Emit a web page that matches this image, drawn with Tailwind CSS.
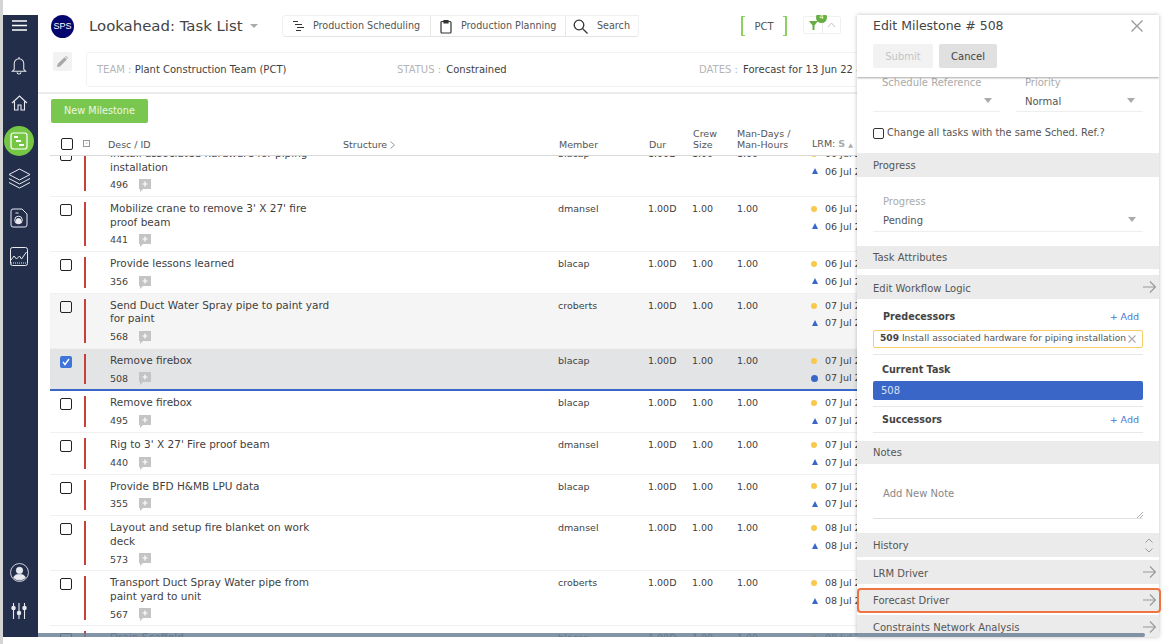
<!DOCTYPE html>
<html lang="en">

<head>
    <meta charset="UTF-8">
    <title>Lookahead: Task List</title>
    <script src="https://cdn.jsdelivr.net/npm/@tailwindcss/browser@4"></script>
</head>

<body class="bg-white overflow-hidden font-['DejaVu_Sans',sans-serif] text-[#3f3f3f]">
    <div class="relative flex w-[1159px] h-[644px] pt-[15px] pb-[7px] border-l-[3px] border-[#d4d4d4]">
        <!-- sidebar -->
        <aside class="w-[35px] shrink-0 bg-[#232e4b] flex flex-col items-center pr-[3px] text-white">
            <svg class="mt-[5px] shrink-0" width="15" height="11" viewBox="0 0 15 11" fill="none" stroke="#fff" stroke-width="1.6"><path d="M0 1h15M0 5.500h15M0 10h15"/></svg>
            <svg class="mt-[25px] shrink-0" width="16" height="19" viewBox="0 0 16 20" fill="none" stroke="#e8eaf0" stroke-width="1.1"><path d="M8 1v2M3 14V8a5 5 0 0 1 10 0v6l2 2H1zM6 17a2 2 0 0 0 4 0"/></svg>
            <svg class="mt-[20px] shrink-0" width="17" height="16" viewBox="0 0 17 16" fill="none" stroke="#e8eaf0" stroke-width="1.1"><path d="M1 8l7.500-7L16 8M3.500 6.500V15h3.500v-5h3v5h3.500V6.500"/></svg>
            <div class="mt-[15px] w-[30px] h-[30px] shrink-0 rounded-full bg-[#76c645] flex items-center justify-center">
                <svg width="18" height="18" viewBox="0 0 18 18" fill="none" stroke="#fff" stroke-width="1.2"><rect x="1" y="1" width="16" height="16" rx="2.500"/><path d="M4 5h4M6 9h5M9 13h5" stroke-width="1.800"/></svg>
            </div>
            <svg class="mt-[12px] shrink-0" width="23" height="22" viewBox="0 0 23 22" fill="none" stroke="#e8eaf0" stroke-width="1"><path d="M11.500 1L22 6.500 11.500 12 1 6.500zM1 10.500L11.500 16 22 10.500M1 14.500L11.500 20 22 14.500"/></svg>
            <svg class="mt-[18px] shrink-0" width="18" height="20" viewBox="0 0 18 20" fill="none" stroke="#e8eaf0" stroke-width="1"><path d="M3 1h9l5 5v11a2 2 0 0 1-2 2H3a2 2 0 0 1-2-2V3a2 2 0 0 1 2-2z"/><circle cx="8.500" cy="12" r="3.800"/><path d="M8.500 12l3 3M5.500 5h3"/><circle cx="8.500" cy="13" r="2.500" fill="#e8eaf0"/></svg>
            <svg class="mt-[19px] shrink-0" width="18" height="19" viewBox="0 0 18 19" fill="none" stroke="#e8eaf0" stroke-width="1"><rect x="0.500" y="0.500" width="17" height="18" rx="2"/><path d="M1 13l3-4 2.500 3 3-3 2 3 5-7"/><path d="M1 16h16" stroke-dasharray="1 1"/></svg>
            <svg class="mt-auto shrink-0" width="19" height="19" viewBox="0 0 18 18" fill="none" stroke="#e8eaf0" stroke-width="0.800"><circle cx="9" cy="9" r="8.500"/><circle cx="9" cy="7" r="3" fill="#e8eaf0"/><path d="M3.500 14c1-3 3-3 5.500-3s4.500 0 5.500 3a8 8 0 0 1-11 0z" fill="#e8eaf0"/></svg>
            <svg class="mt-[21px] mb-[18px] shrink-0" width="16" height="16" viewBox="0 0 16 16" fill="none" stroke="#e8eaf0" stroke-width="1.100"><path d="M2.500 0v16M8 0v16M13.500 0v16"/><circle cx="2.500" cy="5" r="1.700" fill="#e8eaf0"/><circle cx="8" cy="10" r="1.700" fill="#e8eaf0"/><circle cx="13.500" cy="5" r="1.700" fill="#e8eaf0"/></svg>
        </aside>

        <!-- main -->
        <main class="relative flex-1 min-w-0 flex flex-col overflow-hidden">
            <header class="flex h-[37px] shrink-0">
                <div class="ml-[13px] w-[23px] h-[23px] rounded-full bg-[#05056e] text-white text-[9px] flex items-center justify-center font-['Liberation_Sans',sans-serif]">SPS</div>
                <h1 class="ml-[15px] mt-[1px] w-[152px] text-[14.900px] leading-[20px] text-[#444] whitespace-nowrap">Lookahead: Task List</h1>
                <span class="ml-[9px] mt-[9px] w-0 h-0 border-x-[4px] border-x-transparent border-t-[4px] border-t-[#aaa]"></span>
                <div class="ml-[24px] h-[22px] flex rounded-b-[4px] rounded-tl-[4px] border border-[#f0f0f0] border-b-[#e4e4e4] text-[9.600px] text-[#555]">
                    <div class="w-[148px] flex items-center pl-[9px] border-r border-[#e8e8e8]">
                        <svg width="13" height="12" viewBox="0 0 13 12" fill="none" stroke="#333" stroke-width="1.200"><path d="M1 1.500h5M3 4.500h7M5 7.500h7M4 10.500h5"/></svg>
                        <span class="ml-[8px] mt-[1px]">Production Scheduling</span>
                    </div>
                    <div class="w-[135px] flex items-center pl-[9px] border-r border-[#e8e8e8]">
                        <svg width="12" height="15" viewBox="0 0 12 15" fill="none" stroke="#333" stroke-width="1.200"><rect x="1" y="2.500" width="10" height="11.500" rx="1"/><path d="M4 1.500h4v2.500H4z" fill="#333"/></svg>
                        <span class="ml-[9px] mt-[1px]">Production Planning</span>
                    </div>
                    <div class="w-[72px] flex items-center pl-[7px]">
                        <svg width="15" height="15" viewBox="0 0 15 15" fill="none" stroke="#333" stroke-width="1.300"><circle cx="6" cy="6" r="4.800"/><path d="M9.500 9.500L14.500 14.500"/></svg>
                        <span class="ml-[9px] mt-[1px]">Search</span>
                    </div>
                </div>
                <div class="ml-[102px] mt-[1px] w-[46px] h-[20px] flex items-center justify-center border-x-2 border-[#8ed05f] text-[10px] text-[#555] relative">
                    <span class="absolute -left-[2px] top-0 w-[4px] h-[1px] bg-[#8ed05f]"></span>
                    <span class="absolute -left-[2px] bottom-0 w-[4px] h-[1px] bg-[#8ed05f]"></span>
                    <span class="absolute -right-[2px] top-0 w-[4px] h-[1px] bg-[#8ed05f]"></span>
                    <span class="absolute -right-[2px] bottom-0 w-[4px] h-[1px] bg-[#8ed05f]"></span>
                    PCT
                </div>
                <div class="relative ml-[16px] mt-[1px] h-[18px] flex border border-[#f0f0f0] rounded-[2px]">
                    <div class="w-[19px] border-r border-[#ececec] flex items-center justify-center">
                        <svg width="9" height="9" viewBox="0 0 9 9" fill="#67ae44"><path d="M0 0h9L5.500 4.500V9h-2V4.500z"/></svg>
                    </div>
                    <div class="w-[17px] flex items-center justify-center">
                        <svg width="9" height="6" viewBox="0 0 9 6" fill="none" stroke="#c4c4c4"><path d="M1 5l3.500-4L8 5"/></svg>
                    </div>
                    <span class="absolute left-[12px] -top-[5px] w-[11px] h-[11px] rounded-full bg-[#67ae44] text-white text-[7px] leading-[11px] text-center">4</span>
                </div>
            </header>

            <div class="flex h-[42px] shrink-0 border-b-2 border-[#ececec]">
                <button class="ml-[15px] w-[19px] h-[19px] bg-[#f2f2f2] rounded-[2px] flex items-center justify-center">
                    <svg width="11" height="11" viewBox="0 0 11 11" fill="#a8a8a8"><path d="M0 11l.600-3L7.500 1.200l2.300 2.300L3 10.400zM8.200.500L9 0l2 2-.500.800z"/></svg>
                </button>
                <div class="ml-[14px] flex-1 h-[35px] border border-[#f3f3f3] rounded-[3px] text-[10px]">
                    <div class="flex items-center h-full pl-[10px]">
                        <span class="w-[300px] shrink-0"><span class="text-[#b5b5b5]">TEAM :</span> Plant Construction Team (PCT)</span>
                        <span class="w-[302px] shrink-0"><span class="text-[#b5b5b5] mr-[2px]">STATUS :</span> Constrained</span>
                        <span class="whitespace-nowrap"><span class="text-[#b5b5b5] mr-[2px]">DATES :</span> Forecast for 13 Jun 22 - 29 Jul 22</span>
                    </div>
                </div>
            </div>

            <div class="h-[37px] shrink-0 pl-[13px] pt-[3px]">
                <button class="w-[97px] h-[24px] rounded-[2px] bg-[#7ac74f] text-white/85 text-[9.700px]">New Milestone</button>
            </div>

            <!-- table head -->
            <div class="flex ml-[12px] h-[25px] shrink-0 items-end pb-[5px] border-b border-[#d9d9d9] text-[9.500px] leading-[11px] text-[#555]">
                <span class="w-[33px] shrink-0 flex pl-[11px]"><span class="w-[12px] h-[12px] border-[1.500px] border-[#222] rounded-[2px]"></span></span>
                <span class="w-[25px] shrink-0 flex pb-[3px]"><span class="w-[7px] h-[7px] border border-[#999] text-[#888] text-[7px] leading-[4px] text-center">-</span></span>
                <span class="w-[235px] shrink-0">Desc / ID</span>
                <span class="w-[216px] shrink-0 flex items-center">Structure <svg class="ml-[3px]" width="5" height="8" viewBox="0 0 5 8" fill="none" stroke="#999"><path d="M.500.500L4.500 4 .500 7.500"/></svg></span>
                <span class="w-[90px] shrink-0">Member</span>
                <span class="w-[44px] shrink-0">Dur</span>
                <span class="w-[44px] shrink-0">Crew<br>Size</span>
                <span class="w-[75px] shrink-0">Man-Days /<br>Man-Hours</span>
                <span class="whitespace-nowrap">LRM: <b class="text-[#aaa]">S</b> <span class="text-[#aaa] text-[6px]">&#9650;</span></span>
            </div>

            <!-- rows -->
            <div class="flex-1 min-h-0 overflow-hidden ml-[12px]">
                <div id="rows" class="-mt-[14px]"></div>
            </div>
        </main>

        <!-- edit panel, sits over the table -->
        <section class="absolute left-[854px] top-[15px] w-[302px] h-[622px] bg-white overflow-hidden shadow-[0_0_4px_rgba(0,0,0,0.25)] text-[10px] text-[#555]">
            <div class="relative z-10 h-[62px] bg-white shadow-[0_1px_2px_rgba(0,0,0,0.35)] px-[16px]">
                <div class="flex justify-between items-center h-[21px] pt-[1px] text-[12.500px] text-[#444]">
                    <span>Edit Milestone # 508</span>
                    <svg width="12" height="12" viewBox="0 0 12 12" fill="none" stroke="#999" stroke-width="1.300"><path d="M.500.500l11 11M11.500.500l-11 11"/></svg>
                </div>
                <div class="flex gap-[6px] mt-[8px]">
                    <button class="w-[60px] h-[24px] rounded-[2px] bg-[#f2f2f2] text-[#c4c4c4]">Submit</button>
                    <button class="w-[58px] h-[24px] rounded-[2px] bg-[#e0e0e0] text-[#444]">Cancel</button>
                </div>
            </div>

            <div class="flex px-[16px] gap-[16px] h-[36px]">
                <div class="w-[127px] h-[35px] border-b border-[#eee] relative pl-[9px] text-[#aaa] leading-[12px]">
                    Schedule Reference
                    <span class="absolute right-[8px] top-[21px] w-0 h-0 border-x-[4px] border-x-transparent border-t-[5px] border-t-[#aaa]"></span>
                </div>
                <div class="w-[127px] h-[35px] border-b border-[#eee] relative pl-[9px] leading-[12px] text-[#aaa]">
                    Priority
                    <div class="mt-[7px] text-[#555]">Normal</div>
                    <span class="absolute right-[8px] top-[21px] w-0 h-0 border-x-[4px] border-x-transparent border-t-[5px] border-t-[#aaa]"></span>
                </div>
            </div>
            <div class="flex items-center h-[26px] mt-[7px] px-[16px]">
                <span class="w-[11px] h-[11px] border-[1.500px] border-[#333] rounded-[2px] mr-[3px]"></span>
                <span class="text-[9.850px] mt-[1px]">Change all tasks with the same Sched. Ref.?</span>
            </div>
            <div class="mt-[7px] h-[24px] bg-[#ebebeb] flex items-center px-[16px]">Progress</div>
            <div class="mx-[16px] h-[55px] border-b border-[#eee] pl-[10px] pt-[19px] relative leading-[12px]">
                <div class="text-[#aaa]">Progress</div>
                <div class="mt-[7px]">Pending</div>
                <span class="absolute right-[7px] top-[40px] w-0 h-0 border-x-[4px] border-x-transparent border-t-[5px] border-t-[#aaa]"></span>
            </div>
            <div class="mt-[14px] h-[23px] bg-[#ebebeb] flex items-center px-[16px]">Task Attributes</div>
            <div class="mt-[6px] h-[24px] bg-[#ebebeb] flex items-center justify-between pl-[16px] pr-[3px]"><span class="mt-[2px]">Edit Workflow Logic</span> <svg width="13" height="12" viewBox="0 0 13 12" fill="none" stroke="#999" stroke-width="1.200"><path d="M0 6h12.500M7 .500L12.500 6 7 11.500"/></svg></div>

            <div class="mx-[16px] h-[56px] border-b border-[#e8e8e8]">
                <div class="flex justify-between h-[31px] items-center pl-[10px] pr-[4px] pt-[5px]"><b class="text-[#444] text-[9.600px]">Predecessors</b> <span class="text-[#4a78d6] text-[9.500px]">+ Add</span></div>
                <div class="flex items-center justify-between h-[18px] border-[1.500px] border-[#f6cf66] rounded-[2px] pl-[6px] pr-[6px] whitespace-nowrap text-[9.100px]">
                    <span><b class="text-[#444]">509</b> Install associated hardware for piping installation</span>
                    <svg class="shrink-0" width="8" height="8" viewBox="0 0 8 8" fill="none" stroke="#aaa" stroke-width="1.100"><path d="M.500.500l7 7M7.500.500l-7 7"/></svg>
                </div>
            </div>
            <div class="mx-[16px] h-[52px] border-b border-[#e8e8e8]">
                <div class="h-[26px] pl-[9px] flex items-center pt-[5px]"><b class="text-[#444] text-[9.600px]">Current Task</b></div>
                <div class="h-[19px] bg-[#3a66c8] rounded-[2px] pl-[8px] text-[#d8e1f6] flex items-center">508</div>
            </div>
            <div class="mx-[16px] h-[26px] border-b border-[#e8e8e8] flex justify-between items-center pl-[9px] pr-[4px] pt-[2px]"><b class="text-[#444] text-[9.600px]">Successors</b> <span class="text-[#4a78d6] text-[9.500px]">+ Add</span></div>

            <div class="mt-[8px] h-[23px] bg-[#ebebeb] flex items-center px-[16px]">Notes</div>
            <div class="relative mx-[16px] h-[55px] border-b border-[#e2e2e2] pl-[10px] pt-[22px] text-[#888]">
                Add New Note
                <svg class="absolute right-0 bottom-0" width="6" height="6" viewBox="0 0 6 6" stroke="#888" stroke-width="0.700"><path d="M0 6L6 0M3 6L6 3"/></svg>
            </div>
            <div class="mt-[14px] h-[24px] bg-[#ebebeb] flex items-center justify-between pl-[16px] pr-[6px]">History
                <svg width="8" height="15" viewBox="0 0 8 15" fill="none" stroke="#999"><path d="M.500 4.500L4 1l3.500 3.500M.500 10.500L4 14l3.500-3.500"/></svg>
            </div>
            <div class="mt-[3px] h-[24px] bg-[#ebebeb] flex items-center justify-between pl-[16px] pr-[3px]"><span class="mt-[2px]">LRM Driver</span> <svg width="13" height="12" viewBox="0 0 13 12" fill="none" stroke="#999" stroke-width="1.200"><path d="M0 6h12.500M7 .500L12.500 6 7 11.500"/></svg></div>
            <div class="mt-[4px] h-[24px] bg-[#ebebeb] flex items-center justify-between pl-[16px] pr-[3px]">Forecast Driver <svg width="13" height="12" viewBox="0 0 13 12" fill="none" stroke="#999" stroke-width="1.200"><path d="M0 6h12.500M7 .500L12.500 6 7 11.500"/></svg></div>
            <div class="mt-[3px] h-[24px] bg-[#ebebeb] flex items-center justify-between pl-[16px] pr-[3px]">Constraints Network Analysis <svg width="13" height="12" viewBox="0 0 13 12" fill="none" stroke="#999" stroke-width="1.200"><path d="M0 6h12.500M7 .500L12.500 6 7 11.500"/></svg></div>
        </section>
        <!-- orange callout round Forecast Driver -->
        <div class="absolute left-[854px] top-[588px] w-[304px] h-[25px] border-2 border-[#ee7440] rounded-[4px]"></div>
        <!-- horizontal scrollbar over everything -->
        <div class="absolute left-[35px] bottom-[7px] w-[1107px] h-[4px] bg-[#6f8299]/85 rounded-r-full"></div>
    </div>

    <script>
        const rows = [
            { desc: 'Install associated hardware for piping<br>installation', id: 496, who: 'blacap', d: '06 Jul 22', d2: '06 Jul 22' },
            { desc: "Mobilize crane to remove 3' X 27' fire<br>proof beam", id: 441, who: 'dmansel', d: '06 Jul 22', d2: '06 Jul 22' },
            { desc: 'Provide lessons learned', id: 356, who: 'blacap', d: '06 Jul 22', d2: '06 Jul 22' },
            { desc: 'Send Duct Water Spray pipe to paint yard<br>for paint', id: 568, who: 'croberts', d: '07 Jul 22', d2: '07 Jul 22', hover: true },
            { desc: 'Remove firebox', id: 508, who: 'blacap', d: '07 Jul 22', d2: '07 Jul 22', selected: true },
            { desc: 'Remove firebox', id: 495, who: 'blacap', d: '07 Jul 22', d2: '07 Jul 22' },
            { desc: "Rig to 3' X 27' Fire proof beam", id: 440, who: 'dmansel', d: '07 Jul 22', d2: '07 Jul 22' },
            { desc: 'Provide BFD H&amp;MB LPU data', id: 355, who: 'blacap', d: '07 Jul 22', d2: '07 Jul 22' },
            { desc: 'Layout and setup fire blanket on work<br>deck', id: 573, who: 'dmansel', d: '08 Jul 22', d2: '08 Jul 22' },
            { desc: 'Transport Duct Spray Water pipe from<br>paint yard to unit', id: 567, who: 'croberts', d: '08 Jul 22', d2: '08 Jul 22' },
            { desc: 'Drain Scaffold', id: 560, who: 'blacap', d: '08 Jul 22', d2: '08 Jul 22' }
        ];

        document.getElementById('rows').innerHTML = rows.map(r => {
            const bg = r.selected ? 'bg-[#e3e4e6] border-b-2 border-[#3a66c8]' : r.hover ? 'bg-[#f5f5f5] border-b border-[#f0f0f0]' : 'border-b border-[#f0f0f0]';
            const box = r.selected
                ? '<span class="w-[12px] h-[12px] rounded-[2px] bg-[#3f74d8] flex items-center justify-center"><svg width="8" height="8" viewBox="0 0 8 8" fill="none" stroke="#fff" stroke-width="1.400"><path d="M1 4l2 2.500L7 1"/></svg></span>'
                : '<span class="block w-[12px] h-[12px] rounded-[2px] border-[1.500px] border-[#222]"></span>';
            const mark = r.selected
                ? '<span class="w-[7px] h-[7px] rounded-full bg-[#3a66c8]"></span>'
                : '<span class="w-0 h-0 border-x-[3.500px] border-x-transparent border-b-[6px] border-b-[#3a66c8]"></span>';
            return `<div class="flex items-stretch text-[10.500px] leading-[13.500px] text-[#3f3f3f] ${bg}">
                <div class="w-[34px] shrink-0 pl-[10px] pt-[7px]">${box}</div>
                <div class="w-[26px] shrink-0 py-[5px]"><div class="w-[2px] h-full bg-[#c8403c]"></div></div>
                <div class="w-[448px] shrink-0 pt-[5px] pb-[4.100px]">
                    <div>${r.desc}</div>
                    <div class="mt-[4px] h-[14px] flex items-center text-[9.500px]">${r.id}
                        <svg class="ml-[11px] mt-[1px]" width="12" height="13" viewBox="0 0 12 13"><path d="M0 0h12v10H4l-3 3v-3H0z" fill="#c4c4c4"/><path d="M6 2.500v5M3.500 5h5" stroke="#fff" stroke-width="1.200"/></svg>
                    </div>
                </div>
                <div class="w-[90px] shrink-0 pt-[5px] text-[9.500px]">${r.who}</div>
                <div class="w-[44px] shrink-0 pt-[5px] text-[9.500px]">1.00D</div>
                <div class="w-[45px] shrink-0 pt-[5px] text-[9.500px]">1.00</div>
                <div class="w-[74px] shrink-0 pt-[5px] text-[9.500px]">1.00</div>
                <div class="pt-[5px] text-[9.500px] leading-[13.500px] whitespace-nowrap">
                    <div class="flex items-center"><span class="w-[6px] h-[6px] rounded-full bg-[#f8c94c] mr-[8px]"></span>${r.d}</div>
                    <div class="flex items-center mt-[4px]"><span class="w-[7px] mr-[7px] flex justify-center">${mark}</span>${r.d2}</div>
                </div>
            </div>`;
        }).join('');
    </script>
</body>

</html>
